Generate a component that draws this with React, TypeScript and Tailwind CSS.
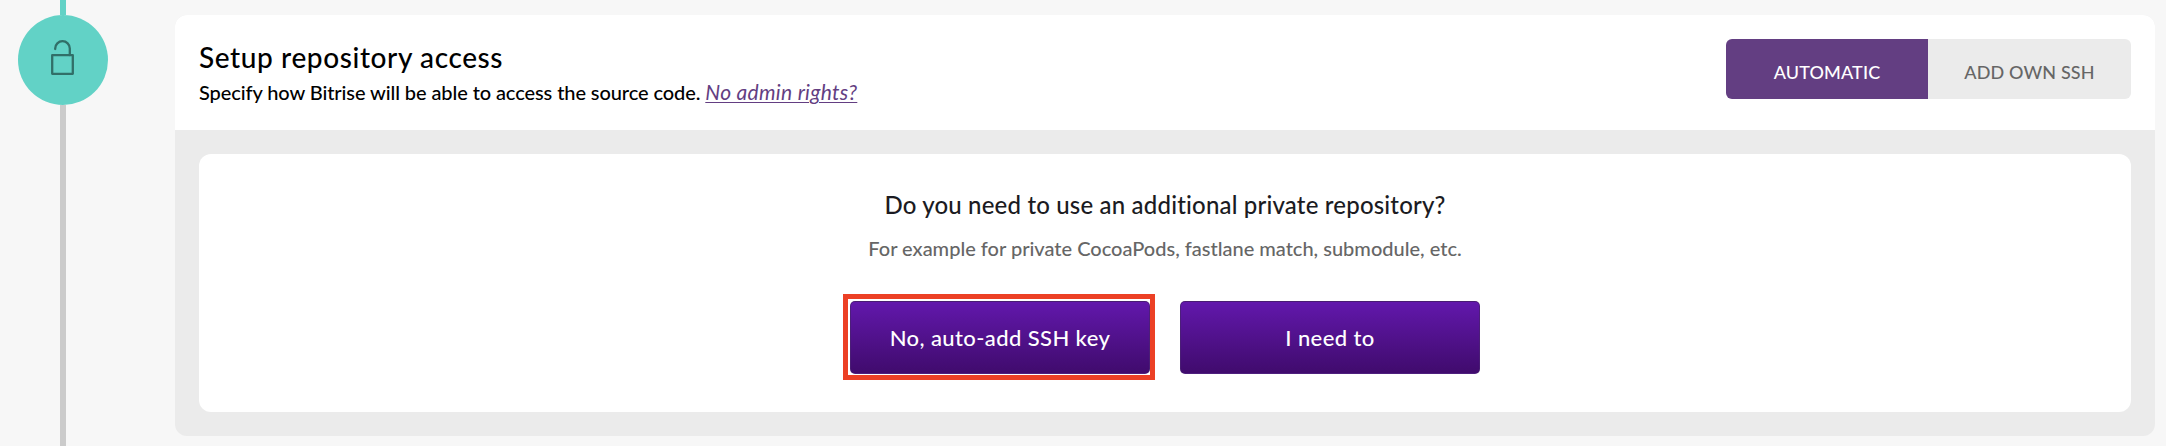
import { useState } from 'react';

const MODES = ['Automatic', 'Add own SSH'];

export default function App() {
  const [mode, setMode] = useState(MODES[0]);

  return (
    <div className="flex h-[446px] w-full overflow-hidden bg-[#f7f7f7] font-[Lato,sans-serif] font-medium">
      {/* Progress rail */}
      <div className="flex w-[126px] shrink-0 flex-col items-center">
        <div className="h-[15px] w-1.5 bg-[#62d2c6]" />
        <div className="flex size-[90px] shrink-0 items-center justify-center rounded-full bg-[#62d2c6]">
          <UnlockIcon />
        </div>
        <div className="w-1.5 flex-1 bg-[#cbcbcb]" />
      </div>

      <section className="mt-[15px] ml-[49px] h-[421px] w-[1980px] overflow-hidden rounded-xl bg-[#ebebeb]">
        <header className="flex h-[115px] justify-between bg-white px-6 pt-6">
          <div className="whitespace-nowrap text-black">
            <h2 className="text-[28px] leading-9 tracking-[0.6px]">Setup repository access</h2>
            <p className="mt-px text-[20px] leading-8 tracking-[-0.09px]">
              Specify how Bitrise will be able to access the source code.{' '}
              <a
                href="#"
                className="text-[21px] leading-none font-normal tracking-[0.3px] text-[#633e82] italic underline decoration-1 underline-offset-2"
              >
                No admin rights?
              </a>
            </p>
          </div>
          <div className="flex h-[60px] w-[405px] overflow-hidden rounded-md">
            {MODES.map(m => (
              <button
                key={m}
                onClick={() => setMode(m)}
                className={`pt-1.5 text-[18px] tracking-[0.15px] uppercase first:w-[202px] last:w-[203px] ${
                  m === mode ? 'bg-[#633e82] text-white' : 'bg-[#ebebeb] text-[#666]'
                }`}
              >
                {m}
              </button>
            ))}
          </div>
        </header>

        <div className="mx-6 mt-6 flex h-[258px] flex-col items-center rounded-xl bg-white pt-[33px]">
          <h3 className="text-[24px] leading-9 tracking-[0.18px] text-[#1b1b22]">
            Do you need to use an additional private repository?
          </h3>
          <p className="mt-[9px] text-[20px] leading-8 text-[#666]">
            For example for private CocoaPods, fastlane match, submodule, etc.
          </p>
          <div className="mt-[37px] flex gap-[30px]">
            <div className="relative">
              <PrimaryButton label="No, auto-add SSH key" />
              <div className="pointer-events-none absolute -top-[7px] -left-[7px] h-[86px] w-[312px] border-5 border-[#ec4025]" />
            </div>
            <PrimaryButton label="I need to" />
          </div>
        </div>
      </section>
    </div>
  );
}

function PrimaryButton({ label }: { label: string }) {
  return (
    <button className="block h-[73px] w-[300px] rounded-[5px] border border-[#4a2273]/80 bg-linear-to-b from-[#6218ac] to-[#400b6d] text-[22px] tracking-[0.4px] text-white">
      {label}
    </button>
  );
}

function UnlockIcon() {
  return (
    <svg
      width="24"
      height="36"
      viewBox="0 0 24 36"
      fill="none"
      stroke="#316f68"
      strokeWidth="2.3"
      strokeLinecap="round"
      strokeLinejoin="round"
      className="-mt-1"
    >
      <path d="M1.2 15.2h20.6v18.6H1.2z" />
      <path d="M4.2 9v-.5a7.3 7.3 0 0 1 14.6 0V15" />
    </svg>
  );
}
